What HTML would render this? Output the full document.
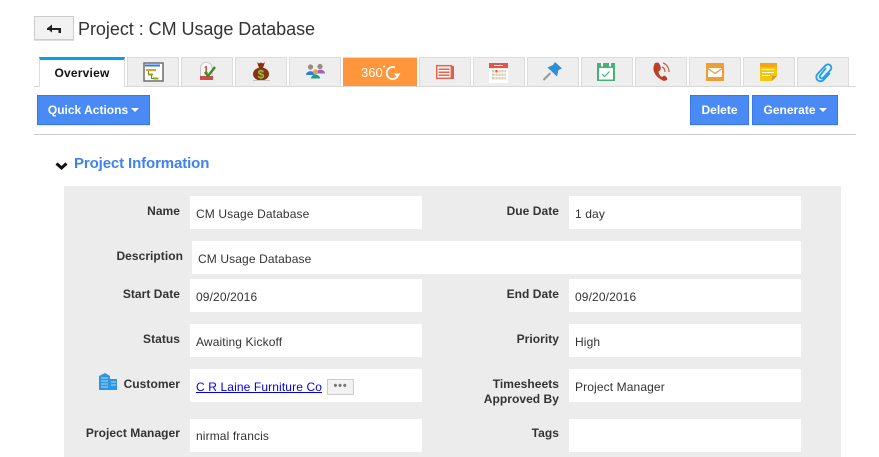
<!DOCTYPE html>
<html><head><meta charset="utf-8"><style>
html,body{margin:0;padding:0;background:#fff}
body{width:879px;height:457px;position:relative;overflow:hidden;font-family:"Liberation Sans",sans-serif;color:#333}
.a{position:absolute}
.tab{position:absolute;top:57px;width:50px;height:28px;background:#eee;border:1px solid #dcdcdc;border-bottom:0}
.tab svg{position:absolute;left:0;top:0;width:50px;height:28px}
.btn{position:absolute;top:95px;height:30px;box-sizing:border-box;background:#4a8af4;border:1px solid #3b78e7;color:#fff;font-weight:bold;font-size:12px;line-height:28px;text-align:center;box-shadow:0 1px 1px rgba(0,0,0,.1)}
.car{display:inline-block;width:0;height:0;border:4px solid transparent;border-top-color:#fff;border-bottom:0;vertical-align:2px;margin-left:3px}
.l{position:absolute;font-weight:bold;font-size:12px;color:#333;text-align:right;line-height:15px;letter-spacing:.05px}
.f{position:absolute;background:#fff;height:33px;width:232px;font-size:12px;line-height:37px;text-indent:6px;color:#333;letter-spacing:.12px}
</style></head><body>
<div class="a" style="left:34px;top:16px;width:38px;height:22px;background:#f2f2f2;border:1px solid #ccc;box-shadow:0 1px 0 #ddd"></div>
<svg class="a" style="left:46px;top:23px" width="16" height="11"><path d="M1 5h14v2H1z" fill="#222"/><path d="M6 1.500v8L1 5.500z" fill="#222"/><path d="M12.500 5h2.500v5h-2.500z" fill="#222"/></svg>
<div class="a" style="left:78px;top:18px;font-size:18px;line-height:22px;color:#333;letter-spacing:-.04px">Project : CM Usage Database</div>

<div class="a" style="left:34px;top:86px;width:822px;height:1px;background:#d8d8d8"></div>
<div class="a" style="left:39px;top:57px;width:86px;height:30px;background:#fff;border-right:1px solid #dcdcdc;border-left:1px solid #dcdcdc;box-sizing:border-box;border-top:3px solid #00a2ed;font-size:12px;font-weight:bold;color:#111;text-align:center;line-height:26px;letter-spacing:.2px">Overview</div>

<div class="tab" style="left:127px"><svg viewBox="0 0 50 28"><rect x="16" y="5" width="19" height="18" fill="#fff" stroke="#777" stroke-width="1.600"/><rect x="17" y="6.500" width="15" height="2" fill="#2a7de1"/><rect x="18" y="11" width="10" height="2" fill="#f39c12"/><rect x="20" y="15.500" width="5" height="2" fill="#7cb800"/><rect x="25" y="19.500" width="5.500" height="2" fill="#7cb800"/><path d="M20.500 13v3M23.500 17.500v3h2" stroke="#777" fill="none"/></svg></div>
<div class="tab" style="left:181px"><svg viewBox="0 0 50 28"><path d="M18.500 19V10a5.800 5.800 0 0 1 11.600 0v9z" fill="#f6f6f6" stroke="#c8c8c8"/><rect x="18" y="18" width="13" height="4" fill="#d9454a"/><text x="21.500" y="15" font-size="10" font-weight="bold" fill="#c0392b" font-family="Liberation Serif">1</text><path d="M23 14l3 4 7-9" stroke="#3d8b1f" stroke-width="2.400" fill="none"/></svg></div>
<div class="tab" style="left:235px"><svg viewBox="0 0 50 28"><ellipse cx="25" cy="16" rx="8" ry="6.500" fill="#8a3210"/><path d="M21 4l2 1.500 2-1 2 1 2-1.500-2 6h-4z" fill="#8a3210"/><text x="25" y="20.500" font-size="12" font-weight="bold" fill="#8cc63f" text-anchor="middle">$</text><rect x="17" y="22" width="17" height="1" fill="#c4c4c4"/></svg></div>
<div class="tab" style="left:289px"><svg viewBox="0 0 50 28"><circle cx="20.500" cy="9" r="2.600" fill="#9a8a80"/><path d="M16 17c0-5 9-5 9 0z" fill="#2a7de1"/><circle cx="30" cy="8.500" r="2.600" fill="#9a8a80"/><path d="M26 15.500c0-5 9-5 9 0z" fill="#a65fb5"/><circle cx="25.500" cy="14" r="2.600" fill="#d9a05f"/><path d="M21 20.500c0-5 9-5 9 0z" fill="#15a08a"/></svg></div>
<div class="a" style="left:343px;top:57px;width:74px;height:29px;background:#ff963c;border-top:1px solid #dcdcdc;box-sizing:border-box"><svg width="74" height="28" style="position:absolute;left:0;top:0"><text x="18" y="19" font-size="13" fill="#fff" font-family="Liberation Sans">360</text><path d="M52 9.500a6 6 0 1 0 3.600 6.500" stroke="#fff" stroke-width="1.800" fill="none"/><path d="M51 15.500h6.500l-3.200 4z" fill="#fff"/><circle cx="41" cy="8.500" r="1" fill="#fff"/></svg></div>
<div class="tab" style="left:419px"><svg viewBox="0 0 50 28"><rect x="31" y="8" width="3" height="13" fill="#d9604c"/><rect x="16.700" y="7.700" width="14.600" height="12.600" fill="#f6f6f6" stroke="#e4644f" stroke-width="1.500"/><path d="M18.500 10.500h11v1.500h-11zM18.500 13.500h11v1.500h-11zM18.500 16.500h11v1.500h-11z" fill="#e4644f"/></svg></div>
<div class="tab" style="left:473px"><svg viewBox="0 0 50 28"><rect x="15" y="11" width="19" height="14" fill="#fff"/><rect x="15" y="5" width="19" height="5" fill="#e4544a"/><rect x="20" y="7" width="9" height="1" fill="#fff"/><path d="M18 12h14v2.500H18zM18 15.500h14v2.500H18zM18 19h14v2.500H18z" fill="#d9cfa8"/><rect x="21" y="12" width="3" height="2.500" fill="#e4544a"/><path d="M21 12v10M24 12v10M27 12v10M30 12v10" stroke="#fff" stroke-width=".8"/></svg></div>
<div class="tab" style="left:527px"><svg viewBox="0 0 50 28"><path d="M15.500 22l7-7" stroke="#999" stroke-width="2"/><path d="M27 4l7 6.500-3.500 1.500-1.500 6.500-9.500-9 5.500-2.500z" fill="#2f8fd6"/></svg></div>
<div class="tab" style="left:581px"><svg viewBox="0 0 50 28"><rect x="15" y="5" width="18" height="18" fill="#46b277"/><rect x="17" y="10" width="14" height="11.500" fill="#fff"/><rect x="19" y="5" width="2" height="3.500" fill="#fff"/><rect x="27" y="5" width="2" height="3.500" fill="#fff"/><path d="M20 16l2.500 2.500 5-5" stroke="#46b277" stroke-width="1.200" fill="none"/></svg></div>
<div class="tab" style="left:635px"><svg viewBox="0 0 50 28"><path d="M19 5c-4 7 0 14 9 18l3-1c.7-2-.5-3.500-3-4.500l-2 1.500c-2-1-3.300-3-3.500-5.500l2-1.500C25.500 9.500 24 6 22 4.500z" fill="#bb3f28"/><path d="M26 9c2 .7 3 2.500 3 5M27 5c3.500 1 6 4.500 6 9" stroke="#c0604c" stroke-width="1.200" fill="none"/></svg></div>
<div class="tab" style="left:689px"><svg viewBox="0 0 50 28"><rect x="16" y="5" width="18" height="18" fill="#ef9d36"/><rect x="18" y="10" width="14" height="9" fill="#fff"/><path d="M18 10.500l7 5 7-5" stroke="#ef9d36" stroke-width="1.300" fill="none"/></svg></div>
<div class="tab" style="left:743px"><svg viewBox="0 0 50 28"><rect x="16" y="5" width="17" height="4" fill="#f2a516"/><path d="M16 9h17v9l-5 5H16z" fill="#f6c70f"/><path d="M28 23v-5h5z" fill="#d89a1a"/><path d="M18 11h12v1H18zM18 14h12v1H18zM18 17h8v1h-8z" fill="#fff"/></svg></div>
<div class="tab" style="left:797px"><svg viewBox="0 0 50 28"><path d="M28 10l-6 7.500a2 2 0 0 0 3 2.500L32.500 12a3.200 3.200 0 0 0-5-4.500L19.500 16a4 4 0 0 0 6 6l6.500-7" stroke="#1ea0f0" stroke-width="1.800" fill="none"/></svg></div>

<div class="btn" style="left:37px;width:113px">Quick Actions<span class="car"></span></div>
<div class="btn" style="left:690px;width:59px">Delete</div>
<div class="btn" style="left:752px;width:86px">Generate<span class="car"></span></div>
<div class="a" style="left:34px;top:134px;width:822px;height:1px;background:#ccc"></div>

<svg class="a" style="left:55px;top:162px" width="13" height="9"><path d="M1.500 1.500L6.500 6L11.500 1.500" stroke="#111" stroke-width="3" fill="none"/></svg>
<div class="a" style="left:74px;top:155px;font-size:15px;line-height:18px;font-weight:bold;color:#3d82f0;letter-spacing:-.12px">Project Information</div>

<div class="a" style="left:64px;top:186px;width:777px;height:271px;background:#ececec"></div>

<div class="l" style="right:699px;top:204px">Name</div><div class="f" style="left:190px;top:196px">CM Usage Database</div>
<div class="l" style="right:320px;top:204px">Due Date</div><div class="f" style="left:569px;top:196px">1 day</div>
<div class="l" style="right:696px;top:249px">Description</div><div class="f" style="left:192px;top:241px;width:609px">CM Usage Database</div>
<div class="l" style="right:699px;top:287px">Start Date</div><div class="f" style="left:190px;top:279px">09/20/2016</div>
<div class="l" style="right:320px;top:287px">End Date</div><div class="f" style="left:569px;top:279px">09/20/2016</div>
<div class="l" style="right:699px;top:332px">Status</div><div class="f" style="left:190px;top:324px">Awaiting Kickoff</div>
<div class="l" style="right:320px;top:332px">Priority</div><div class="f" style="left:569px;top:324px">High</div>
<svg class="a" style="left:99px;top:373px" width="19" height="17"><path d="M0 3l6-3 5 3v14H0zM11 6h7v11h-7z" fill="#2a96e6"/><path d="M2 5h7M2 8h7M2 11h7M2 14h7M12 9h5M12 12h5" stroke="#ececec" stroke-width=".8"/></svg>
<div class="l" style="right:699px;top:377px">Customer</div>
<div class="f" style="left:190px;top:369px"><span style="color:#00e;text-decoration:underline">C R Laine Furniture Co</span></div>
<div class="a" style="left:327px;top:379px;width:25px;height:14px;background:#f2f2f2;border:1px solid #ccc;color:#777;font-size:11px;line-height:13px;text-align:center;font-weight:bold;letter-spacing:.8px">•••</div>
<div class="l" style="right:320px;top:377px">Timesheets<br>Approved By</div><div class="f" style="left:569px;top:369px">Project Manager</div>
<div class="l" style="right:699px;top:426px">Project Manager</div><div class="f" style="left:190px;top:419px;line-height:35px">nirmal francis</div>
<div class="l" style="right:320px;top:426px">Tags</div><div class="f" style="left:569px;top:419px"></div>
</body></html>
